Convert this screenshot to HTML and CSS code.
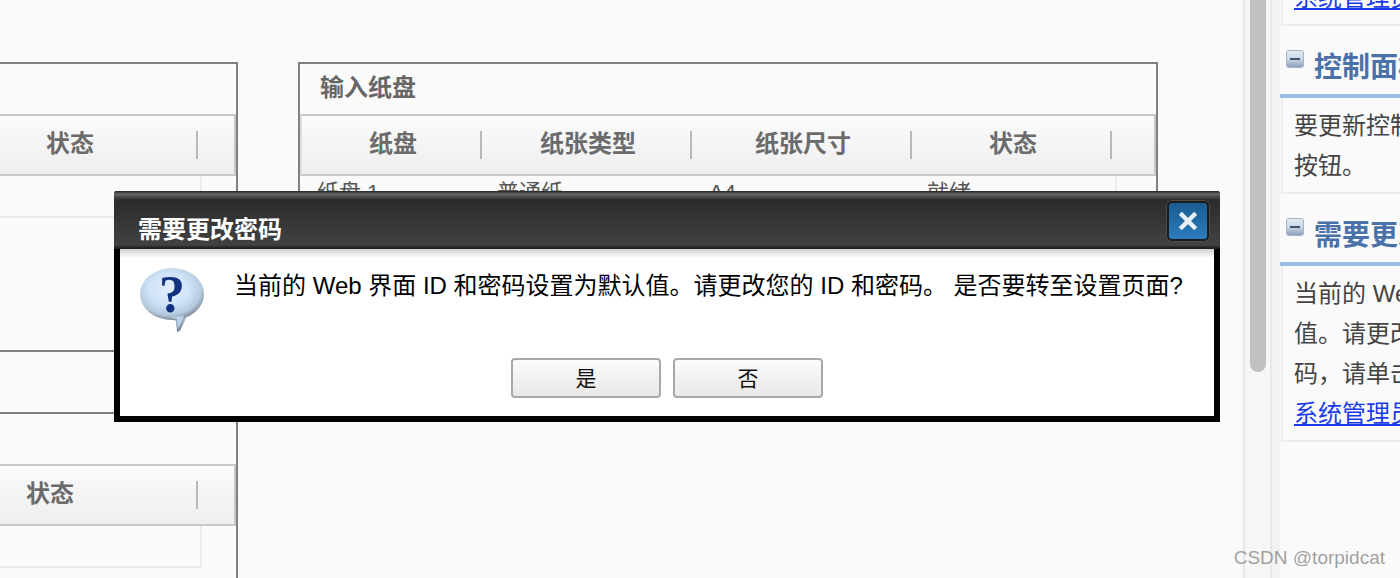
FILE: index.html
```html
<!DOCTYPE html>
<html lang="zh-CN">
<head>
<meta charset="utf-8">
<title>需要更改密码</title>
<link rel="stylesheet" href="styles.css">
</head>
<body>
<div class="page">
  <main class="main">
    <div class="col col-left">
      <section class="panel panel-clip panel-a">
        <div class="panel-title"></div>
        <div class="thead thead-end"><div class="th th-a">状态</div></div>
        <div class="trow trow-end"></div>
      </section>
      <section class="panel panel-clip panel-b">
        <div class="panel-title"></div>
        <div class="thead thead-end"><div class="th th-b">状态</div></div>
        <div class="trow trow-end trow-b"></div>
      </section>
    </div>
    <div class="col col-right">
      <section class="panel panel-full">
        <div class="panel-title">输入纸盘</div>
        <div class="thead">
          <div class="th w1">纸盘</div>
          <div class="th w2">纸张类型</div>
          <div class="th w3">纸张尺寸</div>
          <div class="th w4">状态</div>
        </div>
        <div class="trow">
          <div class="td d1">纸盘 1</div>
          <div class="td d2">普通纸</div>
          <div class="td d3">A4</div>
          <div class="td d4">就绪</div>
        </div>
      </section>
    </div>
  </main>
  <div class="rail"><div class="thumb"></div></div>
  <div class="gutter"></div>
  <aside class="side">
    <div class="side-box side-first"><a class="side-link" href="#">系统管理员</a></div>
    <h2 class="side-head">
      <svg class="minus" viewBox="0 0 18 18" aria-hidden="true"><defs><linearGradient id="mg" x1="0" y1="0" x2="0" y2="1"><stop offset="0" stop-color="#e4eaf3"/><stop offset="0.5" stop-color="#ccd7e6"/><stop offset="1" stop-color="#8a9dba"/></linearGradient></defs><rect x="0.5" y="0.5" width="17" height="17" rx="2.5" fill="url(#mg)" stroke="#a7b4c7"/><rect x="4" y="8" width="10" height="2" fill="#3c5272"/></svg>
      <span>控制面板</span>
    </h2>
    <div class="side-box">
      <div class="line">要更新控制面板</div>
      <div class="line">按钮。</div>
    </div>
    <h2 class="side-head">
      <svg class="minus" viewBox="0 0 18 18" aria-hidden="true"><rect x="0.5" y="0.5" width="17" height="17" rx="2.5" fill="url(#mg)" stroke="#a7b4c7"/><rect x="4" y="8" width="10" height="2" fill="#3c5272"/></svg>
      <span>需要更改</span>
    </h2>
    <div class="side-box">
      <div class="line">当前的 Web 界面</div>
      <div class="line">值。请更改您的</div>
      <div class="line">码，请单击下面</div>
      <div class="line"><a class="side-link" href="#">系统管理员</a></div>
    </div>
  </aside>
</div>

<div class="dialog" role="dialog">
  <header class="dialog-bar">
    <span class="dialog-title">需要更改密码</span>
    <button class="close" aria-label="关闭">
      <svg viewBox="0 0 20 20" width="22" height="22" aria-hidden="true"><path d="M3 3 17 17M17 3 3 17" stroke="#e6eef6" stroke-width="4" fill="none"/></svg>
    </button>
  </header>
  <div class="dialog-main">
    <svg class="qicon" viewBox="0 0 64 66" width="64" height="66" aria-hidden="true">
      <defs>
        <radialGradient id="qb" cx="0.46" cy="0.4" r="0.64">
          <stop offset="0" stop-color="#e3f0fc"/>
          <stop offset="0.5" stop-color="#cfe3f8"/>
          <stop offset="0.78" stop-color="#b6cade"/>
          <stop offset="1" stop-color="#6f7a86"/>
        </radialGradient>
        <linearGradient id="qt" x1="0" y1="0" x2="0" y2="1">
          <stop offset="0" stop-color="#b8cce0"/>
          <stop offset="1" stop-color="#6f8296"/>
        </linearGradient>
      </defs>
      <path d="M24 49 48 47 40 64 37 65 36 54Z" fill="url(#qt)"/>
      <ellipse cx="32" cy="27" rx="32" ry="26" fill="url(#qb)"/>
      <path d="M30 50 44 49 38 62 37 52Z" fill="#bcd2e8"/>
      <text x="32" y="45" class="qmark" text-anchor="middle">?</text>
    </svg>
    <p class="dialog-text">当前的 Web 界面 ID 和密码设置为默认值。请更改您的 ID 和密码。 是否要转至设置页面?</p>
  </div>
  <div class="dialog-foot">
    <button class="btn">是</button>
    <button class="btn">否</button>
  </div>
</div>

<div class="mark">CSDN @torpidcat</div>
</body>
</html>
```

FILE: styles.css
```css
* { box-sizing: border-box; }
html, body { margin: 0; height: 100%; overflow: hidden; }
body {
  background: #fafafa;
  font-family: "Liberation Sans", "Noto Sans CJK SC", sans-serif;
  color: #444;
}
.page { display: flex; height: 578px; overflow: hidden; }

/* main column */
.main { flex: none; width: 1243px; display: flex; padding-top: 62px; overflow: hidden; }
.col-left { flex: none; width: 238px; margin-right: 60px; display: flex; flex-direction: column; }
.col-right { flex: none; width: 860px; }

.panel { flex: none; border: 2px solid #808080; overflow: hidden; background: #fafafa; }
.panel-clip { border-left: 0; }
.panel-a { height: 290px; margin-bottom: 60px; }
.panel-b { height: 300px; border-bottom: 0; }
.panel-full { height: 300px; }

.panel-title {
  height: 50px;
  padding: 8px 0 0 20px;
  font-size: 24px;
  line-height: 32px;
  font-weight: 700;
  color: #666;
}
.thead {
  display: flex;
  height: 62px;
  padding-top: 15px;
  border-top: 2px solid #c8c8c8;
  border-bottom: 2px solid #c8c8c8;
  border-left: 2px solid #dedede;
  border-right: 2px solid #c8c8c8;
  background: linear-gradient(#fbfbfb, #eeeeee);
}
.panel-clip .thead { border-left: 0; }
.thead-end { justify-content: flex-end; padding-right: 36px; }
.th {
  flex: none;
  height: 28px;
  padding-left: 4px;
  line-height: 26px;
  font-size: 24px;
  font-weight: 700;
  color: #6b6b6b;
  text-align: center;
  border-right: 2px solid #b8b8b8;
}
.th-a { width: 258px; }
.th-b { width: 298px; }
.w1 { width: 180px; }
.w2 { width: 210px; }
.w3 { width: 220px; }
.w4 { width: 200px; }

.trow {
  display: flex;
  width: 815px;
  height: 42px;
  margin-left: 2px;
  border-right: 2px solid #ececec;
  border-bottom: 2px solid #ececec;
}
.trow-end { width: 202px; margin-left: 0; }
.td { flex: none; padding: 2px 0 0 15px; font-size: 22px; line-height: 30px; color: #555; }
.d1 { width: 180px; }
.d2 { width: 212px; }
.d3 { width: 218px; }
.d4 { width: 200px; }

/* scrollbar rail */
.rail {
  flex: none;
  width: 29px;
  padding-left: 5px;
  background: #f6f6f6;
  border-left: 2px solid #e6e6e6;
  border-right: 2px solid #e9e9e9;
}
.thumb { width: 16px; height: 372px; background: #c1c1c1; border-radius: 0 0 8px 8px; }
.gutter { flex: none; width: 8px; background: #f2f2f2; }

/* sidebar */
.side { flex: 1; min-width: 0; overflow: hidden; }
.side-box {
  margin-left: 1px;
  padding: 8px 0 0 11px;
  height: 96px;
  border-left: 2px solid #ececec;
  border-bottom: 2px solid #ececec;
  font-size: 24px;
  line-height: 40px;
  white-space: nowrap;
  overflow: hidden;
}
.side-first { height: 48px; margin-top: -22px; padding-top: 0; }
.side-box:last-child { height: 176px; }
.side-link { color: #1a3ce8; text-decoration: underline; }
.side-head {
  display: flex;
  align-items: flex-start;
  gap: 10px;
  height: 72px;
  margin: 0;
  padding: 24px 0 0 6px;
  border-bottom: 4px solid #9bbce2;
  font-size: 28px;
  line-height: 32px;
  color: #4a72a8;
  white-space: nowrap;
}
.side-head span { margin-top: 2px; }
.minus { flex: none; width: 18px; height: 18px; }

/* dialog overlay */
.dialog {
  position: absolute;
  left: 114px;
  top: 191px;
  width: 1106px;
  height: 231px;
  background: #000;
  border-radius: 3px 3px 0 0;
  padding: 0 6px 6px;
  display: flex;
  flex-direction: column;
  font-family: "Liberation Sans", "Noto Sans CJK SC", sans-serif;
}
.dialog-bar {
  flex: none;
  position: relative;
  height: 58px;
  margin: 0 -6px;
  padding: 23px 0 0 24px;
  border-radius: 3px 3px 0 0;
  background: linear-gradient(#222 0, #666 3px, #2b2b2b 9px, #424242 54px, #1e1e1e 57px);
}
.dialog-title { font-size: 24px; line-height: 32px; font-weight: 700; color: #fff; }
.close {
  position: absolute;
  right: 11px;
  top: 10px;
  width: 42px;
  height: 40px;
  padding: 0;
  display: flex;
  align-items: center;
  justify-content: center;
  border: 2px solid #1c1c1c;
  border-radius: 5px;
  background: linear-gradient(#1a5c92, #2c7cbc);
  box-shadow: 0 0 0 1px #4a4a4a;
}
.dialog-main {
  flex: none;
  height: 109px;
  display: flex;
  align-items: flex-start;
  padding: 18px 0 0 20px;
  background: linear-gradient(#cfcfcf, #fff 9px);
}
.qicon { flex: none; }
.qmark { font-family: "Liberation Serif", serif; font-weight: 700; font-size: 52px; fill: #12327f; }
.dialog-text {
  margin: 3px 0 0 30px;
  font-size: 24px;
  line-height: 32px;
  color: #000;
  white-space: nowrap;
}
.dialog-foot {
  flex: 1;
  display: flex;
  justify-content: center;
  gap: 12px;
  background: #fff;
}
.btn {
  width: 150px;
  height: 40px;
  padding: 0 0 2px;
  border: 2px solid #a8a8a8;
  border-radius: 4px;
  background: linear-gradient(#fcfcfc, #e8e8e8);
  font-family: inherit;
  font-size: 21px;
  color: #111;
}

.mark {
  position: absolute;
  right: 15px;
  bottom: 8px;
  font-size: 19px;
  line-height: 24px;
  color: rgba(120, 120, 120, 0.7);
}
```
